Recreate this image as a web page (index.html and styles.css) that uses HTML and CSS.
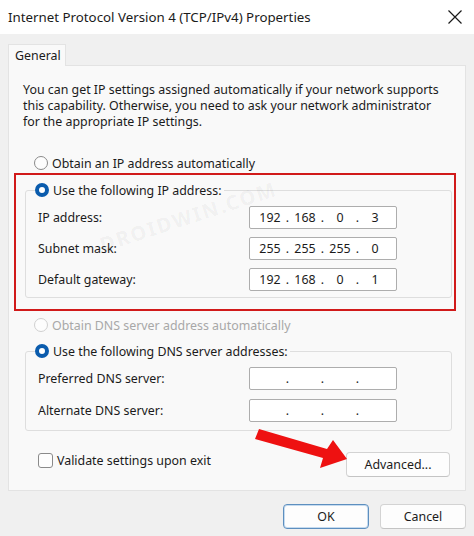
FILE: index.html
```html
<!DOCTYPE html>
<html lang="en">
<head>
    <meta charset="UTF-8">
    <meta name="viewport" content="width=device-width, initial-scale=1.0">
    <title>Internet Protocol Version 4 (TCP/IPv4) Properties</title>
    <link rel="stylesheet" href="styles.css">
</head>
<body>
    <div class="window">
        <div class="titlebar">
            <span class="title">Internet Protocol Version 4 (TCP/IPv4) Properties</span>
            <svg class="close" width="16" height="16" viewBox="0 0 16 16">
                <path d="M1.5 1.5 L14.5 14.5 M14.5 1.5 L1.5 14.5" stroke="#1a1a1a" stroke-width="1.2" fill="none"/>
            </svg>
        </div>

        <div class="content">
            <div class="tabs">
                <div class="tab">General</div>
            </div>

            <div class="panel">
                <p class="desc">You can get IP settings assigned automatically if your network supports this capability. Otherwise, you need to ask your network administrator for the appropriate IP settings.</p>

                <div class="option">
                    <span class="radio"></span>
                    <span>Obtain an IP address automatically</span>
                </div>

                <div class="highlight">
                    <fieldset class="group">
                        <legend class="option">
                            <span class="radio checked"></span>
                            <span>Use the following IP address:</span>
                        </legend>
                        <div class="field">
                            <span>IP address:</span>
                            <div class="ip">
                                <span class="seg">192</span><span class="dot">.</span>
                                <span class="seg">168</span><span class="dot">.</span>
                                <span class="seg">0</span><span class="dot">.</span>
                                <span class="seg">3</span>
                            </div>
                        </div>
                        <div class="field">
                            <span>Subnet mask:</span>
                            <div class="ip">
                                <span class="seg">255</span><span class="dot">.</span>
                                <span class="seg">255</span><span class="dot">.</span>
                                <span class="seg">255</span><span class="dot">.</span>
                                <span class="seg">0</span>
                            </div>
                        </div>
                        <div class="field">
                            <span>Default gateway:</span>
                            <div class="ip">
                                <span class="seg">192</span><span class="dot">.</span>
                                <span class="seg">168</span><span class="dot">.</span>
                                <span class="seg">0</span><span class="dot">.</span>
                                <span class="seg">1</span>
                            </div>
                        </div>
                    </fieldset>
                </div>

                <div class="option disabled">
                    <span class="radio"></span>
                    <span>Obtain DNS server address automatically</span>
                </div>

                <fieldset class="group dns">
                    <legend class="option">
                        <span class="radio checked"></span>
                        <span>Use the following DNS server addresses:</span>
                    </legend>
                    <div class="field">
                        <span>Preferred DNS server:</span>
                        <div class="ip">
                            <span class="seg"></span><span class="dot">.</span>
                            <span class="seg"></span><span class="dot">.</span>
                            <span class="seg"></span><span class="dot">.</span>
                            <span class="seg"></span>
                        </div>
                    </div>
                    <div class="field">
                        <span>Alternate DNS server:</span>
                        <div class="ip">
                            <span class="seg"></span><span class="dot">.</span>
                            <span class="seg"></span><span class="dot">.</span>
                            <span class="seg"></span><span class="dot">.</span>
                            <span class="seg"></span>
                        </div>
                    </div>
                </fieldset>

                <div class="bottom-row">
                    <label class="check">
                        <span class="box"></span>
                        <span>Validate settings upon exit</span>
                    </label>
                    <button class="btn advanced">Advanced...</button>
                </div>
            </div>

            <div class="footer">
                <button class="btn default">OK</button>
                <button class="btn">Cancel</button>
            </div>
        </div>

        <!-- overlays from the screenshot -->
        <div class="watermark">DROIDWIN.COM</div>
        <svg class="arrow" width="474" height="536" viewBox="0 0 474 536">
            <polygon points="259,429 327,449 333,440 347,459 320,468 323,458 255,439" fill="#ee1111"/>
        </svg>
    </div>
</body>
</html>
```

FILE: styles.css
```css
body {
    margin: 0;
    font-family: "Noto Sans", "Open Sans", sans-serif;
    font-size: 12.4px;
    color: #1b1b1b;
    background: #f0f0f0;
}

.window {
    position: relative;
    width: 474px;
    height: 536px;
    overflow: hidden;
    background: #f0f0f0;
}

.titlebar {
    height: 34px;
    background: #fff;
    display: flex;
    align-items: center;
    justify-content: space-between;
    padding: 0 11px 0 8px;
}

.title {
    font-size: 13.3px;
}

.content {
    padding: 10px 8px 0 8px;
}

.tabs {
    display: flex;
}

.tab {
    width: 58px;
    height: 22px;
    line-height: 22px;
    padding-left: 6px;
    box-sizing: border-box;
    background: #f9f9f9;
    border: 1px solid #e3e3e3;
    border-bottom: none;
    margin-bottom: -1px;
    position: relative;
    z-index: 1;
}

.panel {
    height: 426px;
    box-sizing: border-box;
    background: #f9f9f9;
    border: 1px solid #e3e3e3;
    padding: 16px 7px 0 5px;
}

.desc {
    margin: 0 0 0 9px;
    line-height: 16px;
    width: 422px;
}

.option {
    display: flex;
    align-items: center;
    gap: 4px;
    height: 18px;
}

.panel > .option {
    padding-left: 20px;
    margin-top: 24px;
}

.option.disabled {
    color: #a8a8a8;
    margin-top: 5px !important;
}

.radio {
    width: 12px;
    height: 12px;
    border: 1px solid #8a8a8a;
    border-radius: 50%;
    background: #fdfdfd;
}

.disabled .radio {
    border-color: #d0d0d0;
}

.radio.checked {
    width: 6px;
    height: 6px;
    border: 4px solid #0b5cad;
    background: #fff;
}

.highlight {
    margin-top: 1px;
    width: 442px;
    height: 138px;
    box-sizing: border-box;
    border: 2px solid #d11a1a;
    padding: 6px 0 0 9px;
}

.group {
    margin: 0;
    width: 427px;
    box-sizing: border-box;
    border: 1px solid #dedede;
    border-radius: 3px;
    padding: 7px 0 6px 12px;
}

.group legend {
    padding: 0 2px 0 0;
    margin-left: -3px;
}

.group.dns {
    margin: 8px 0 0 11px;
    padding-bottom: 8px;
}

.field {
    display: flex;
    align-items: center;
    justify-content: space-between;
    width: 359px;
    height: 23px;
}

.field + .field {
    margin-top: 8px;
}

.dns .field + .field {
    margin-top: 9px;
}

.ip {
    width: 148px;
    height: 23px;
    box-sizing: border-box;
    background: #fff;
    border: 1px solid #adadad;
    border-radius: 2px;
    display: flex;
    align-items: center;
    padding-left: 5px;
}

.seg {
    width: 30px;
    text-align: center;
}

.dot {
    width: 5px;
    text-align: center;
}

.bottom-row {
    display: flex;
    justify-content: space-between;
    align-items: flex-start;
    margin-top: 21px;
    padding: 0 8px 0 24px;
}

.check {
    display: flex;
    align-items: center;
    gap: 4px;
    margin-top: 0;
}

.box {
    width: 13px;
    height: 13px;
    border: 1px solid #8a8a8a;
    border-radius: 3px;
    background: #fdfdfd;
}

.btn {
    font-family: inherit;
    font-size: 12.4px;
    color: #1b1b1b;
    background: #fdfdfd;
    border: 1px solid #d3d3d3;
    border-bottom-color: #c4c4c4;
    border-radius: 4px;
    height: 25px;
    padding: 0;
}

.advanced {
    width: 104px;
}

.footer {
    display: flex;
    justify-content: flex-end;
    gap: 11px;
    margin-top: 13px;
}

.footer .btn {
    width: 86px;
}

.btn.default {
    border: 1px solid #5d8fbf;
    box-shadow: inset 0 0 0 1px #c6dbef;
}

.watermark {
    position: absolute;
    left: 96px;
    top: 203px;
    font-size: 20px;
    font-weight: bold;
    letter-spacing: 2px;
    color: rgba(0, 0, 0, 0.05);
    transform: rotate(-18deg);
}

.arrow {
    position: absolute;
    left: 0;
    top: 0;
}
```
